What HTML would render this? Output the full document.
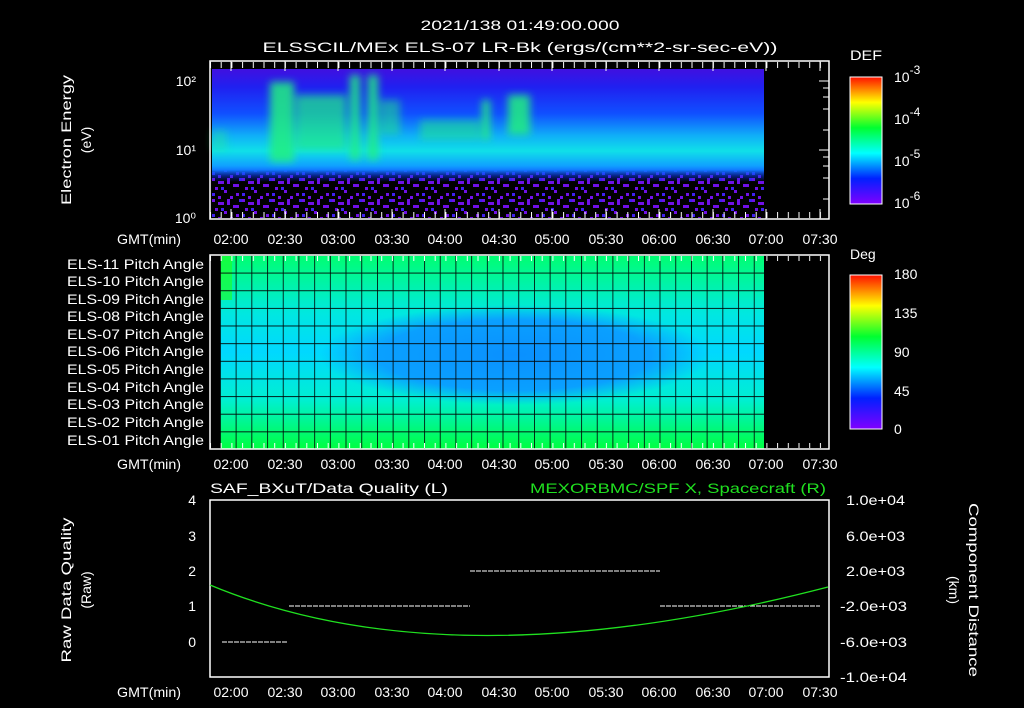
<!DOCTYPE html>
<html><head><meta charset="utf-8"><style>
html,body{margin:0;padding:0;background:#000;width:1024px;height:708px;overflow:hidden}
svg{display:block}
text{font-family:"Liberation Sans",sans-serif;fill:#fff;font-size:14px}
</style></head><body>
<svg width="1024" height="708" viewBox="0 0 1024 708" xmlns="http://www.w3.org/2000/svg">
<defs>
<linearGradient id="cb" x1="0" y1="1" x2="0" y2="0">
<stop offset="0" stop-color="#8000ff"/><stop offset="0.2" stop-color="#0020ff"/>
<stop offset="0.4" stop-color="#00ffff"/><stop offset="0.6" stop-color="#00ff30"/>
<stop offset="0.8" stop-color="#ffff00"/><stop offset="1" stop-color="#ff1000"/>
</linearGradient>
<linearGradient id="spec" x1="0" y1="0" x2="0" y2="1">
<stop offset="0" stop-color="#4010e0"/><stop offset="0.12" stop-color="#2020f0"/><stop offset="0.3" stop-color="#1050ff"/>
<stop offset="0.45" stop-color="#10b0f8"/><stop offset="0.55" stop-color="#10e0e8"/>
<stop offset="0.65" stop-color="#10a0ff"/><stop offset="0.72" stop-color="#1040ff"/>
<stop offset="0.8" stop-color="#3020f0"/><stop offset="1" stop-color="#4010d0"/>
</linearGradient>
<linearGradient id="pa" x1="0" y1="0" x2="0" y2="1">
<stop offset="0" stop-color="#00ff70"/><stop offset="0.3" stop-color="#00e8e0"/>
<stop offset="0.5" stop-color="#00d8ff"/><stop offset="0.75" stop-color="#00f0d0"/>
<stop offset="1" stop-color="#00ff40"/>
</linearGradient>
<radialGradient id="blu" cx="0.5" cy="0.5" r="0.5">
<stop offset="0" stop-color="#0a90ff"/><stop offset="0.7" stop-color="#0aa0ff"/><stop offset="1" stop-color="#0aa0ff" stop-opacity="0"/>
</radialGradient>
<filter id="bl" x="-20%" y="-20%" width="140%" height="140%"><feGaussianBlur stdDeviation="4"/></filter>
<pattern id="grid" x="220" y="255" width="15.7" height="17.64" patternUnits="userSpaceOnUse">
<path d="M0 0V17.64M0 0H15.7" stroke="#000" stroke-width="1.6" fill="none"/>
</pattern>
<pattern id="tk" x="210" y="0" width="10.7" height="10" patternUnits="userSpaceOnUse">
<path d="M0.5 0V10" stroke="#fff" stroke-width="1"/>
</pattern>
<pattern id="noise" x="212" y="178" width="30" height="21" patternUnits="userSpaceOnUse">
<rect width="30" height="21" fill="#000"/>
<g fill="#7010e8">
<rect x="0" y="0" width="3" height="3"/><rect x="6" y="3" width="6" height="3"/><rect x="15" y="0" width="3" height="6"/><rect x="21" y="6" width="6" height="3"/>
<rect x="3" y="9" width="3" height="3"/><rect x="12" y="12" width="3" height="3"/><rect x="24" y="15" width="3" height="3"/><rect x="6" y="18" width="3" height="3"/><rect x="18" y="18" width="3" height="3"/>
</g>
<g fill="#4020f0"><rect x="27" y="0" width="3" height="3"/><rect x="9" y="9" width="3" height="3"/><rect x="0" y="15" width="3" height="3"/></g>
</pattern>
<linearGradient id="nf" x1="0" y1="0" x2="0" y2="1"><stop offset="0" stop-color="#fff" stop-opacity="0"/><stop offset="0.25" stop-color="#fff"/></linearGradient>
<mask id="nm"><rect x="212" y="170" width="552" height="48" fill="url(#nf)"/></mask>
</defs>

<text x="520" y="30" text-anchor="middle" font-size="16" textLength="199" lengthAdjust="spacingAndGlyphs">2021/138 01:49:00.000</text>
<text x="520" y="52" text-anchor="middle" font-size="16" textLength="515" lengthAdjust="spacingAndGlyphs">ELSSCIL/MEx ELS-07 LR-Bk  (ergs/(cm**2-sr-sec-eV))</text>

<!-- top panel -->
<rect x="212" y="69" width="552" height="149" fill="url(#spec)"/>
<g filter="url(#bl)" fill="#20f080" opacity="0.85">
<rect x="270" y="82" width="24" height="80"/><rect x="296" y="95" width="50" height="55" opacity="0.8"/>
<rect x="350" y="75" width="10" height="85"/><rect x="368" y="75" width="10" height="85"/>
<rect x="380" y="100" width="20" height="35" opacity="0.6"/><rect x="482" y="100" width="8" height="40"/>
<rect x="508" y="95" width="22" height="40"/><rect x="420" y="120" width="60" height="20" opacity="0.6"/>
<rect x="212" y="130" width="15" height="20" opacity="0.4"/>
</g>
<rect x="212" y="170" width="552" height="48" fill="url(#noise)" mask="url(#nm)"/>
<rect x="210" y="61" width="619" height="158" fill="none" stroke="#fff" stroke-width="1.5"/>
<rect x="210" y="62" width="619" height="6" fill="url(#tk)"/>
<rect x="210" y="212" width="619" height="6" fill="url(#tk)"/>
<g stroke="#fff"><path d="M210 61v10M231 61v10M285 61v10M338 61v10M392 61v10M445 61v10M499 61v10M552 61v10M606 61v10M659 61v10M713 61v10M766 61v10M820 61v10M231 219v-10M285 219v-10M338 219v-10M392 219v-10M445 219v-10M499 219v-10M552 219v-10M606 219v-10M659 219v-10M713 219v-10M766 219v-10M820 219v-10"/>
<path d="M829 81h-10M829 88h-6M829 97h-6M829 109h-6M829 130h-6M829 150h-10M829 157h-6M829 166h-6M829 178h-6M829 199h-6"/></g>
<text x="196" y="86" text-anchor="end">10²</text>
<text x="196" y="155" text-anchor="end">10¹</text>
<text x="196" y="223" text-anchor="end">10⁰</text>
<text transform="translate(71,140) rotate(-90)" text-anchor="middle" font-size="15" textLength="130" lengthAdjust="spacingAndGlyphs">Electron Energy</text>
<text transform="translate(91,140) rotate(-90)" text-anchor="middle" font-size="15">(eV)</text>
<rect x="850" y="77" width="32" height="127" fill="url(#cb)" stroke="#fff"/>
<text x="850" y="60" font-size="16" textLength="32" lengthAdjust="spacingAndGlyphs">DEF</text>
<text x="894" y="82" font-size="17">10<tspan dy="-8" font-size="12">-3</tspan></text>
<text x="894" y="124" font-size="17">10<tspan dy="-8" font-size="12">-4</tspan></text>
<text x="894" y="166" font-size="17">10<tspan dy="-8" font-size="12">-5</tspan></text>
<text x="894" y="208" font-size="17">10<tspan dy="-8" font-size="12">-6</tspan></text>

<g font-size="14">
<text x="117" y="244" textLength="64" lengthAdjust="spacingAndGlyphs">GMT(min)</text>
<g text-anchor="middle">
<text x="231" y="244">02:00</text><text x="285" y="244">02:30</text><text x="338" y="244">03:00</text><text x="392" y="244">03:30</text><text x="445" y="244">04:00</text><text x="499" y="244">04:30</text><text x="552" y="244">05:00</text><text x="606" y="244">05:30</text><text x="659" y="244">06:00</text><text x="713" y="244">06:30</text><text x="766" y="244">07:00</text><text x="820" y="244">07:30</text>
</g>
</g>

<!-- middle panel -->
<rect x="220" y="255" width="544" height="194" fill="url(#pa)"/>
<ellipse cx="515" cy="355" rx="195" ry="50" fill="url(#blu)"/>
<rect x="220" y="255" width="12" height="45" fill="#20ff20" opacity="0.6"/>
<rect x="220" y="255" width="544" height="194" fill="url(#grid)"/>
<rect x="210" y="255" width="619" height="194" fill="none" stroke="#fff" stroke-width="1.5"/>
<rect x="210" y="256" width="619" height="5" fill="url(#tk)"/>
<rect x="210" y="443" width="619" height="5" fill="url(#tk)"/>
<g text-anchor="end" font-size="13">
<text x="204" y="269" textLength="137" lengthAdjust="spacingAndGlyphs">ELS-11 Pitch Angle</text><text x="204" y="286" textLength="137" lengthAdjust="spacingAndGlyphs">ELS-10 Pitch Angle</text>
<text x="204" y="304" textLength="137" lengthAdjust="spacingAndGlyphs">ELS-09 Pitch Angle</text><text x="204" y="321" textLength="137" lengthAdjust="spacingAndGlyphs">ELS-08 Pitch Angle</text>
<text x="204" y="339" textLength="137" lengthAdjust="spacingAndGlyphs">ELS-07 Pitch Angle</text><text x="204" y="356" textLength="137" lengthAdjust="spacingAndGlyphs">ELS-06 Pitch Angle</text>
<text x="204" y="374" textLength="137" lengthAdjust="spacingAndGlyphs">ELS-05 Pitch Angle</text><text x="204" y="392" textLength="137" lengthAdjust="spacingAndGlyphs">ELS-04 Pitch Angle</text>
<text x="204" y="409" textLength="137" lengthAdjust="spacingAndGlyphs">ELS-03 Pitch Angle</text><text x="204" y="427" textLength="137" lengthAdjust="spacingAndGlyphs">ELS-02 Pitch Angle</text>
<text x="204" y="445" textLength="137" lengthAdjust="spacingAndGlyphs">ELS-01 Pitch Angle</text>
</g>
<rect x="850" y="275" width="32" height="154" fill="url(#cb)" stroke="#fff"/>
<text x="850" y="259" font-size="16">Deg</text>
<g font-size="16"><text x="894" y="279">180</text><text x="894" y="318">135</text><text x="894" y="357">90</text><text x="894" y="396">45</text><text x="894" y="434">0</text></g>
<text x="117" y="469" textLength="64" lengthAdjust="spacingAndGlyphs">GMT(min)</text>
<g text-anchor="middle">
<text x="231" y="469">02:00</text><text x="285" y="469">02:30</text><text x="338" y="469">03:00</text><text x="392" y="469">03:30</text><text x="445" y="469">04:00</text><text x="499" y="469">04:30</text><text x="552" y="469">05:00</text><text x="606" y="469">05:30</text><text x="659" y="469">06:00</text><text x="713" y="469">06:30</text><text x="766" y="469">07:00</text><text x="820" y="469">07:30</text>
</g>

<!-- bottom panel -->
<text x="210" y="493" font-size="16" textLength="238" lengthAdjust="spacingAndGlyphs">SAF_BXuT/Data Quality (L)</text>
<text x="530" y="493" font-size="16" textLength="296" lengthAdjust="spacingAndGlyphs" style="fill:#20e020">MEXORBMC/SPF X, Spacecraft (R)</text>
<rect x="210" y="500" width="619" height="177" fill="none" stroke="#fff" stroke-width="1.5"/>
<g stroke="#fff" stroke-width="1" stroke-dasharray="5 1">
<path d="M222 642H287M289 606H470M470 571H660M660 606H820"/>
</g>
<path d="M210 585 Q450 685 828 587" stroke="#20e020" stroke-width="1.3" fill="none"/>
<g text-anchor="end" font-size="15"><text x="196" y="505">4</text><text x="196" y="541">3</text><text x="196" y="576">2</text><text x="196" y="611">1</text><text x="196" y="647">0</text></g>
<g font-size="13"><text x="846" y="505" textLength="59" lengthAdjust="spacingAndGlyphs">1.0e+04</text><text x="846" y="541" textLength="59" lengthAdjust="spacingAndGlyphs">6.0e+03</text><text x="846" y="576" textLength="59" lengthAdjust="spacingAndGlyphs">2.0e+03</text><text x="840" y="611" textLength="67" lengthAdjust="spacingAndGlyphs">-2.0e+03</text><text x="840" y="647" textLength="67" lengthAdjust="spacingAndGlyphs">-6.0e+03</text><text x="840" y="682" textLength="67" lengthAdjust="spacingAndGlyphs">-1.0e+04</text></g>
<text transform="translate(71,590) rotate(-90)" text-anchor="middle" font-size="15" textLength="145" lengthAdjust="spacingAndGlyphs">Raw Data Quality</text>
<text transform="translate(91,590) rotate(-90)" text-anchor="middle" font-size="15">(Raw)</text>
<text transform="translate(969,590) rotate(90)" text-anchor="middle" font-size="15" textLength="174" lengthAdjust="spacingAndGlyphs">Component Distance</text>
<text transform="translate(949,590) rotate(90)" text-anchor="middle" font-size="15">(km)</text>
<text x="117" y="697" textLength="64" lengthAdjust="spacingAndGlyphs">GMT(min)</text>
<g text-anchor="middle">
<text x="231" y="697">02:00</text><text x="285" y="697">02:30</text><text x="338" y="697">03:00</text><text x="392" y="697">03:30</text><text x="445" y="697">04:00</text><text x="499" y="697">04:30</text><text x="552" y="697">05:00</text><text x="606" y="697">05:30</text><text x="659" y="697">06:00</text><text x="713" y="697">06:30</text><text x="766" y="697">07:00</text><text x="820" y="697">07:30</text>
</g>
</svg>
</body></html>
